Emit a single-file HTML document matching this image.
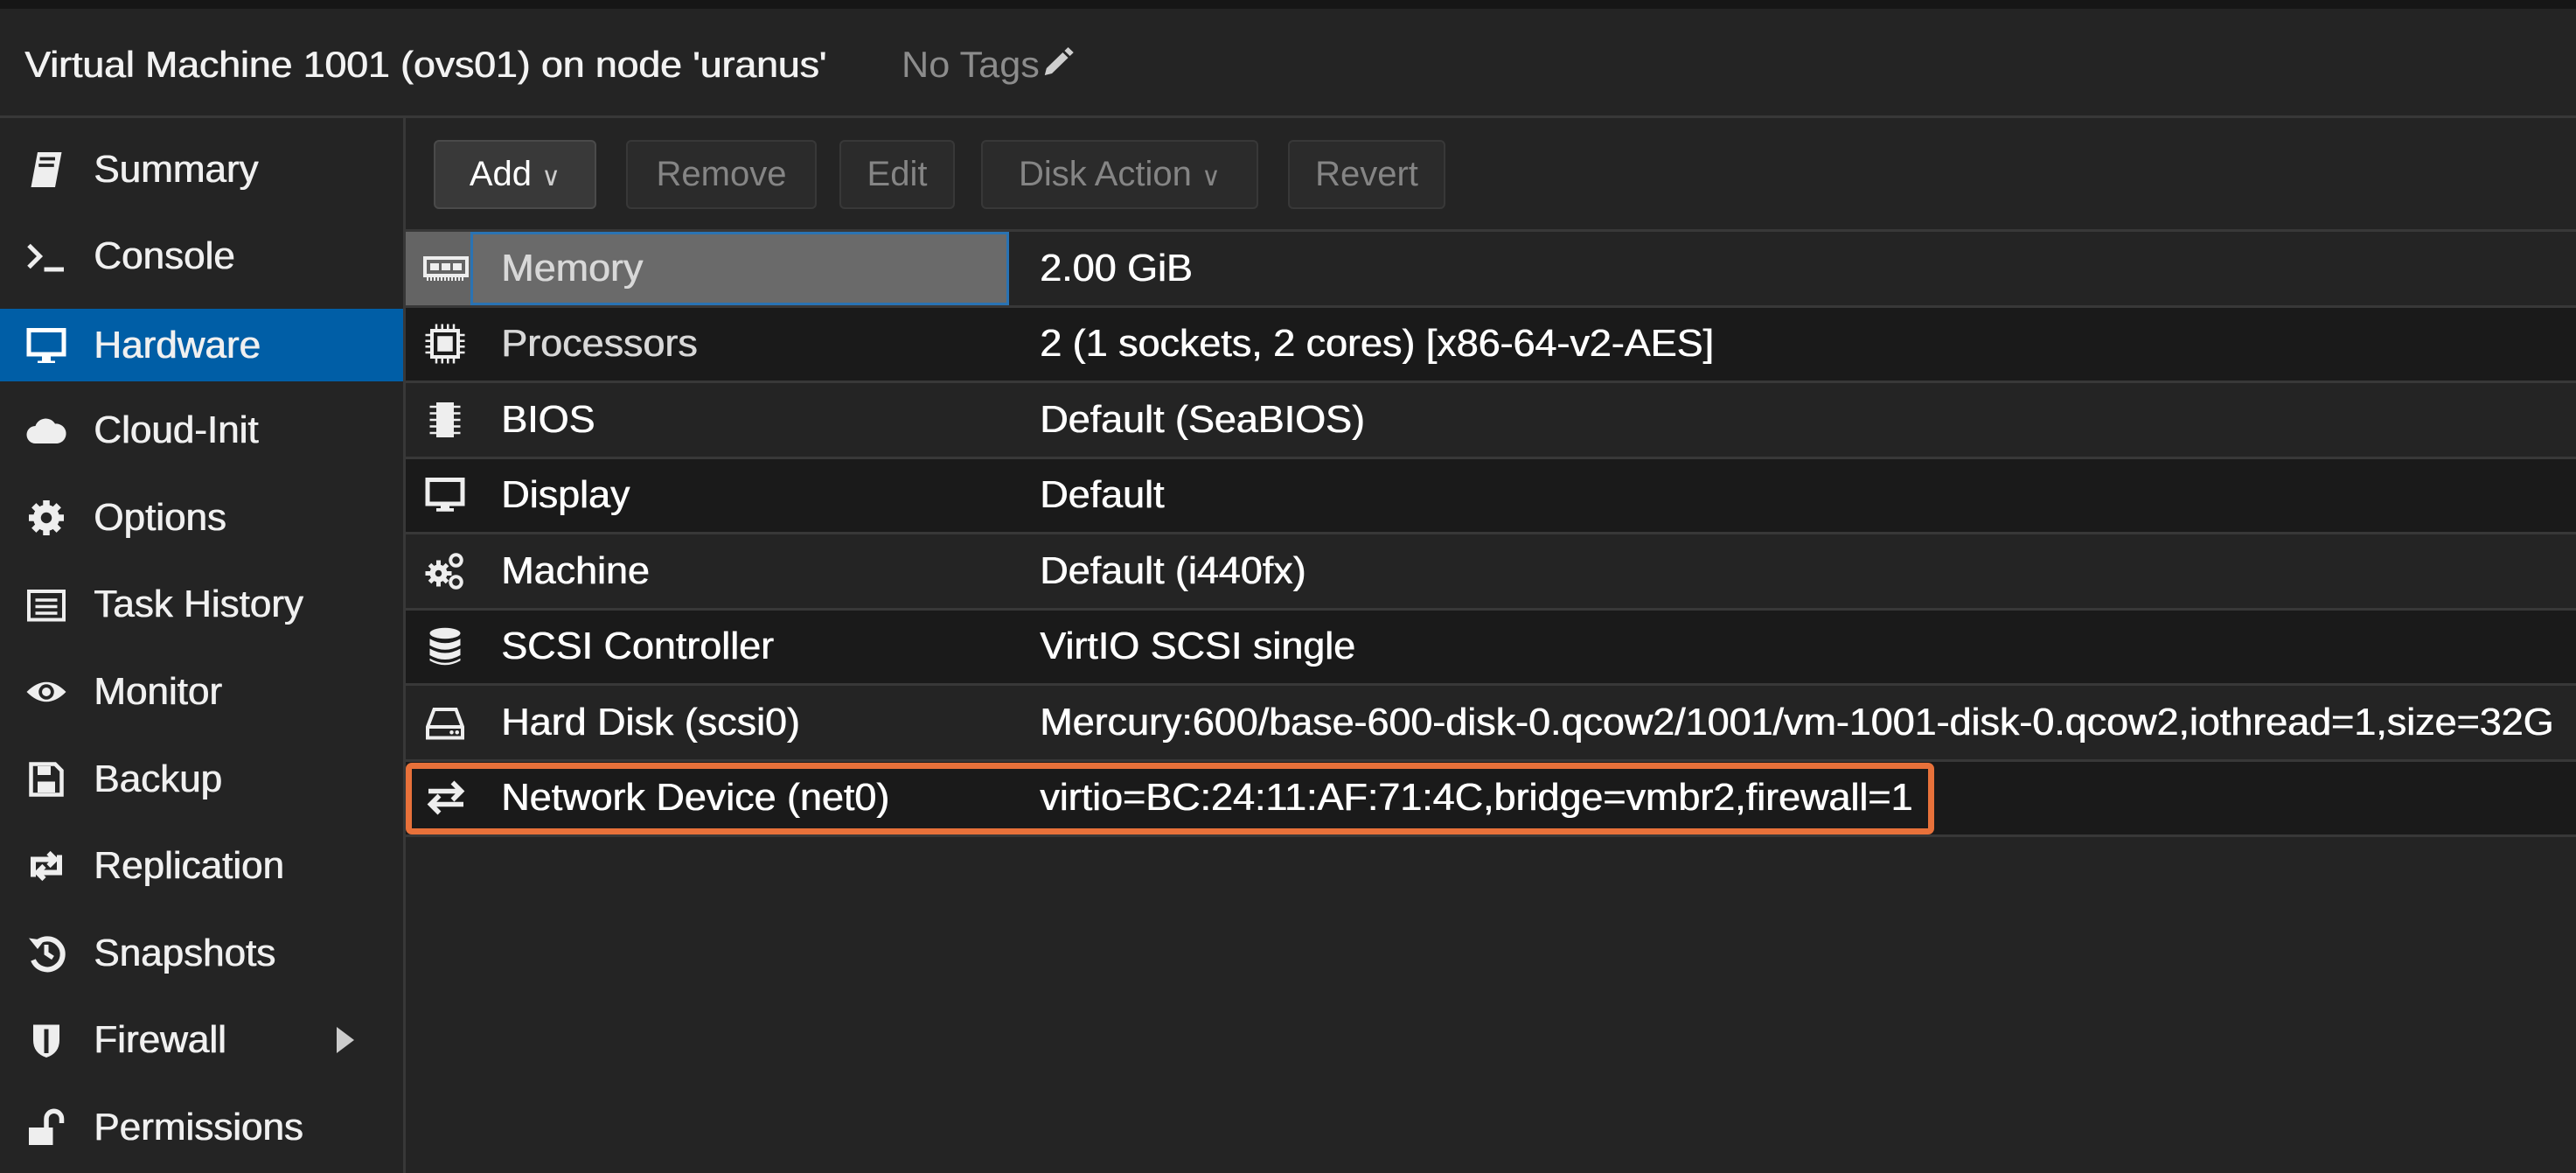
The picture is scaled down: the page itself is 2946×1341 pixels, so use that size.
<!DOCTYPE html>
<html><head><meta charset="utf-8"><style>
*{box-sizing:border-box;margin:0;padding:0}
body{width:2946px;height:1341px;background:#242424;font-family:"Liberation Sans",Arial,sans-serif;color:#fff;overflow:hidden;position:relative}
.top{position:absolute;left:0;top:0;width:2946px;height:10px;background:#161616}
.hdr{position:absolute;left:0;top:10px;width:2946px;height:125px;background:#242424;border-bottom:3px solid #383838}
.title{position:absolute;left:28px;top:40px;font-size:42px;color:#f2f2f2;transform:scaleX(1.06);transform-origin:left;white-space:nowrap;text-shadow:.8px 0 0 #f2f2f2}
.tags{position:absolute;left:1031px;top:40px;font-size:42px;color:#8c8c8c;transform:scaleX(1.03);transform-origin:left;white-space:nowrap}
.side{position:absolute;left:0;top:135px;width:464px;height:1206px;background:#242424;border-right:3px solid #383838}
.it{position:absolute;left:0;width:461px;height:83px;font-size:44px;color:#f0f0f0;text-shadow:.8px 0 0 #f0f0f0}
.it span{position:absolute;left:107px;top:50%;transform:translateY(-50%) scaleX(1.0);transform-origin:left;white-space:nowrap}
.it svg{position:absolute;left:28px;top:50%;transform:translateY(-50%)}
.sel{background:#005ea6}
.tb{position:absolute;top:160px;height:79px;border:2px solid #383838;border-radius:6px;background:#2b2b2b;color:#858585;font-size:40px;line-height:75px;text-align:center;white-space:nowrap}
.grid{position:absolute;left:464px;top:262px;width:2482px;border-top:3px solid #383838}
.row{position:relative;height:86.5px;border-bottom:3px solid #383838;font-size:44px;color:#fff;text-shadow:.7px 0 0 currentColor}
.row.d{background:#1a1a1a}
.c1{position:absolute;left:109px;top:50%;transform:translateY(-50%) scaleX(1.02);transform-origin:left;white-space:nowrap}
.c2{position:absolute;left:725px;top:50%;transform:translateY(-50%) scaleX(1.02);transform-origin:left;white-space:nowrap}
.ic{position:absolute;left:20px;top:50%;transform:translateY(-50%)}
.box{position:absolute;left:464px;top:872px;width:1748px;height:82px;border:7px solid #e8713a;border-radius:7px}
</style></head><body>
<div class="top"></div>
<div class="hdr">
<div class="title">Virtual Machine 1001 (ovs01) on node 'uranus'</div>
<div class="tags">No Tags<svg width="40" height="40" viewBox="0 0 20 20" style="vertical-align:-4px"><path d="M3 17l1-4 9-9 3 3-9 9z M14 3l2-2 3 3-2 2z" fill="#cfcfcf"/></svg></div>
</div>
<div class="side">
<div class="it" style="top:17px"><svg width="50" height="50" viewBox="0 0 20 20"><path d="M6 2h11l-3 16H3z" fill="#eee"/><path d="M7 5h7M6.5 8h7" stroke="#242424" stroke-width="1.5"/></svg><span>Summary</span></div>
<div class="it" style="top:116px"><svg width="50" height="50" viewBox="0 0 20 20"><path d="M2 5l5 5-5 5" stroke="#eee" stroke-width="2" fill="none"/><path d="M9 16h9" stroke="#eee" stroke-width="2"/></svg><span>Console</span></div>
<div class="it sel" style="top:218px"><svg width="50" height="50" viewBox="0 0 20 20"><rect x="2" y="3" width="16" height="11" fill="none" stroke="#fff" stroke-width="2"/><path d="M8 14h4v3H8z M6 17h8v1H6z" fill="#fff"/></svg><span>Hardware</span></div>
<div class="it" style="top:315px"><svg width="50" height="50" viewBox="0 0 20 20"><path d="M5 16a4 4 0 010-8 5 5 0 019-1 4.5 4.5 0 011 9z" fill="#eee"/></svg><span>Cloud-Init</span></div>
<div class="it" style="top:415px"><svg width="50" height="50" viewBox="0 0 20 20"><circle cx="10" cy="10" r="6" fill="#eee"/><path d="M10 2v16M2 10h16M4.3 4.3l11.4 11.4M15.7 4.3L4.3 15.7" stroke="#eee" stroke-width="3"/><circle cx="10" cy="10" r="2.5" fill="#242424"/></svg><span>Options</span></div>
<div class="it" style="top:514px"><svg width="50" height="50" viewBox="0 0 20 20"><rect x="2" y="4" width="16" height="13" fill="none" stroke="#eee" stroke-width="1.6"/><path d="M5 8h10M5 11h10M5 14h10" stroke="#eee" stroke-width="1.4"/></svg><span>Task History</span></div>
<div class="it" style="top:614px"><svg width="50" height="50" viewBox="0 0 20 20"><path d="M1 10q9-9 18 0-9 9-18 0z" fill="#eee"/><circle cx="10" cy="10" r="3.5" fill="#242424"/><circle cx="10" cy="10" r="2" fill="#eee"/></svg><span>Monitor</span></div>
<div class="it" style="top:714px"><svg width="50" height="50" viewBox="0 0 20 20"><path d="M3 3h11l3 3v11H3z" fill="none" stroke="#eee" stroke-width="1.8"/><rect x="6" y="4" width="6" height="4" fill="#eee"/><rect x="6" y="11" width="8" height="5" fill="#eee"/></svg><span>Backup</span></div>
<div class="it" style="top:813px"><svg width="50" height="50" viewBox="0 0 20 20"><path d="M4 15V7h10M11 4l3 3-3 3M16 5v8H6M9 16l-3-3 3-3" stroke="#eee" stroke-width="2.4" fill="none"/></svg><span>Replication</span></div>
<div class="it" style="top:913px"><svg width="50" height="50" viewBox="0 0 20 20"><path d="M5 6a7 7 0 11-1 7" stroke="#eee" stroke-width="2.4" fill="none"/><path d="M2 3l4 5 3-4z" fill="#eee"/><path d="M10 6v4l3 2" stroke="#eee" stroke-width="2" fill="none"/></svg><span>Snapshots</span></div>
<div class="it" style="top:1012px"><svg width="50" height="50" viewBox="0 0 20 20"><path d="M4 3h12v7q0 6-6 8-6-2-6-8z" fill="#eee"/><path d="M10 5v11" stroke="#242424" stroke-width="2"/></svg><span>Firewall</span><svg style="left:382px" width="26" height="30" viewBox="0 0 10 12"><path d="M1 0l8 6-8 6z" fill="#ccc"/></svg></div>
<div class="it" style="top:1112px"><svg width="50" height="50" viewBox="0 0 20 20"><rect x="2" y="10" width="11" height="8" fill="#eee"/><path d="M10 10V6a3.5 3.5 0 017 0v2" stroke="#eee" stroke-width="2.2" fill="none"/></svg><span>Permissions</span></div>
</div>
<div class="tb" style="left:496px;width:186px;background:#393939;border-color:#4a4a4a;color:#fff">Add <span style="font-size:30px;color:#ccc">&#8744;</span></div>
<div class="tb" style="left:716px;width:218px">Remove</div>
<div class="tb" style="left:960px;width:132px">Edit</div>
<div class="tb" style="left:1122px;width:317px">Disk Action <span style="font-size:30px">&#8744;</span></div>
<div class="tb" style="left:1473px;width:180px">Revert</div>
<div class="grid">
<div class="row" style="background:#242424"><div style="position:absolute;left:0;top:0;width:74px;height:100%;background:#646464"></div><div style="position:absolute;left:74px;top:0;width:616px;height:100%;background:#6a6a6a;border:3px solid #2a73b3"></div>
<svg class="ic" width="52" height="40" viewBox="0 0 26 20"><rect x="1" y="4" width="24" height="10" fill="none" stroke="#eee" stroke-width="2"/><rect x="4" y="7" width="5" height="4" fill="#eee"/><rect x="10.5" y="7" width="5" height="4" fill="#eee"/><rect x="17" y="7" width="5" height="4" fill="#eee"/><path d="M2 16h22" stroke="#eee" stroke-width="2" stroke-dasharray="1 1"/></svg>
<span class="c1" style="color:#d8d8d8">Memory</span><span class="c2">2.00 GiB</span></div>
<div class="row d"><svg class="ic" width="50" height="50" viewBox="0 0 20 20"><rect x="4" y="4" width="12" height="12" fill="none" stroke="#eee" stroke-width="1.6"/><rect x="6.5" y="6.5" width="7" height="7" fill="#eee"/><path d="M6 1v3M8.7 1v3M11.3 1v3M14 1v3M6 16v3M8.7 16v3M11.3 16v3M14 16v3M1 6h3M1 8.7h3M1 11.3h3M1 14h3M16 6h3M16 8.7h3M16 11.3h3M16 14h3" stroke="#eee" stroke-width="1"/></svg><span class="c1" style="color:#d8d8d8">Processors</span><span class="c2">2 (1 sockets, 2 cores) [x86-64-v2-AES]</span></div>
<div class="row"><svg class="ic" width="50" height="50" viewBox="0 0 20 20"><rect x="6" y="2" width="8" height="16" fill="#eee"/><path d="M3 4h3M3 7h3M3 10h3M3 13h3M3 16h3M14 4h3M14 7h3M14 10h3M14 13h3M14 16h3" stroke="#eee" stroke-width="1"/></svg><span class="c1">BIOS</span><span class="c2">Default (SeaBIOS)</span></div>
<div class="row d"><svg class="ic" width="50" height="50" viewBox="0 0 20 20"><rect x="2" y="3" width="16" height="11" fill="none" stroke="#eee" stroke-width="2"/><path d="M8 14h4v2H8z M6 16h8v1.5H6z" fill="#eee"/></svg><span class="c1">Display</span><span class="c2">Default</span></div>
<div class="row"><svg class="ic" width="50" height="50" viewBox="0 0 20 20"><circle cx="7" cy="11" r="4" fill="#eee"/><path d="M7 5v12M1 11h12M3 7l8 8M11 7l-8 8" stroke="#eee" stroke-width="2"/><circle cx="7" cy="11" r="1.5" fill="#242424"/><circle cx="15" cy="5" r="2.5" fill="none" stroke="#eee" stroke-width="1.6"/><circle cx="15" cy="15" r="2.5" fill="none" stroke="#eee" stroke-width="1.6"/></svg><span class="c1">Machine</span><span class="c2">Default (i440fx)</span></div>
<div class="row d"><svg class="ic" width="50" height="50" viewBox="0 0 20 20"><ellipse cx="10" cy="4" rx="7" ry="2.5" fill="#eee"/><path d="M3 6.5q7 4 14 0v3q-7 4-14 0zM3 11q7 4 14 0v3q-7 4-14 0zM3 15.5q7 4 14 0v1q-7 4-14 0z" fill="#eee"/></svg><span class="c1">SCSI Controller</span><span class="c2">VirtIO SCSI single</span></div>
<div class="row"><svg class="ic" width="50" height="50" viewBox="0 0 20 20"><path d="M5 4h10l3 8v5H2v-5z M2 12h16" fill="none" stroke="#eee" stroke-width="1.6"/><circle cx="13" cy="14.5" r=".9" fill="#eee"/><circle cx="15.5" cy="14.5" r=".9" fill="#eee"/></svg><span class="c1">Hard Disk (scsi0)</span><span class="c2">Mercury:600/base-600-disk-0.qcow2/1001/vm-1001-disk-0.qcow2,iothread=1,size=32G</span></div>
<div class="row d"><svg class="ic" width="52" height="50" viewBox="0 0 20 20"><path d="M2 7h15M13 3l4 4-4 4M18 13H3M7 9l-4 4 4 4" stroke="#eee" stroke-width="2.2" fill="none"/></svg><span class="c1">Network Device (net0)</span><span class="c2">virtio=BC:24:11:AF:71:4C,bridge=vmbr2,firewall=1</span></div>
</div>
<div class="box"></div>
</body></html>
